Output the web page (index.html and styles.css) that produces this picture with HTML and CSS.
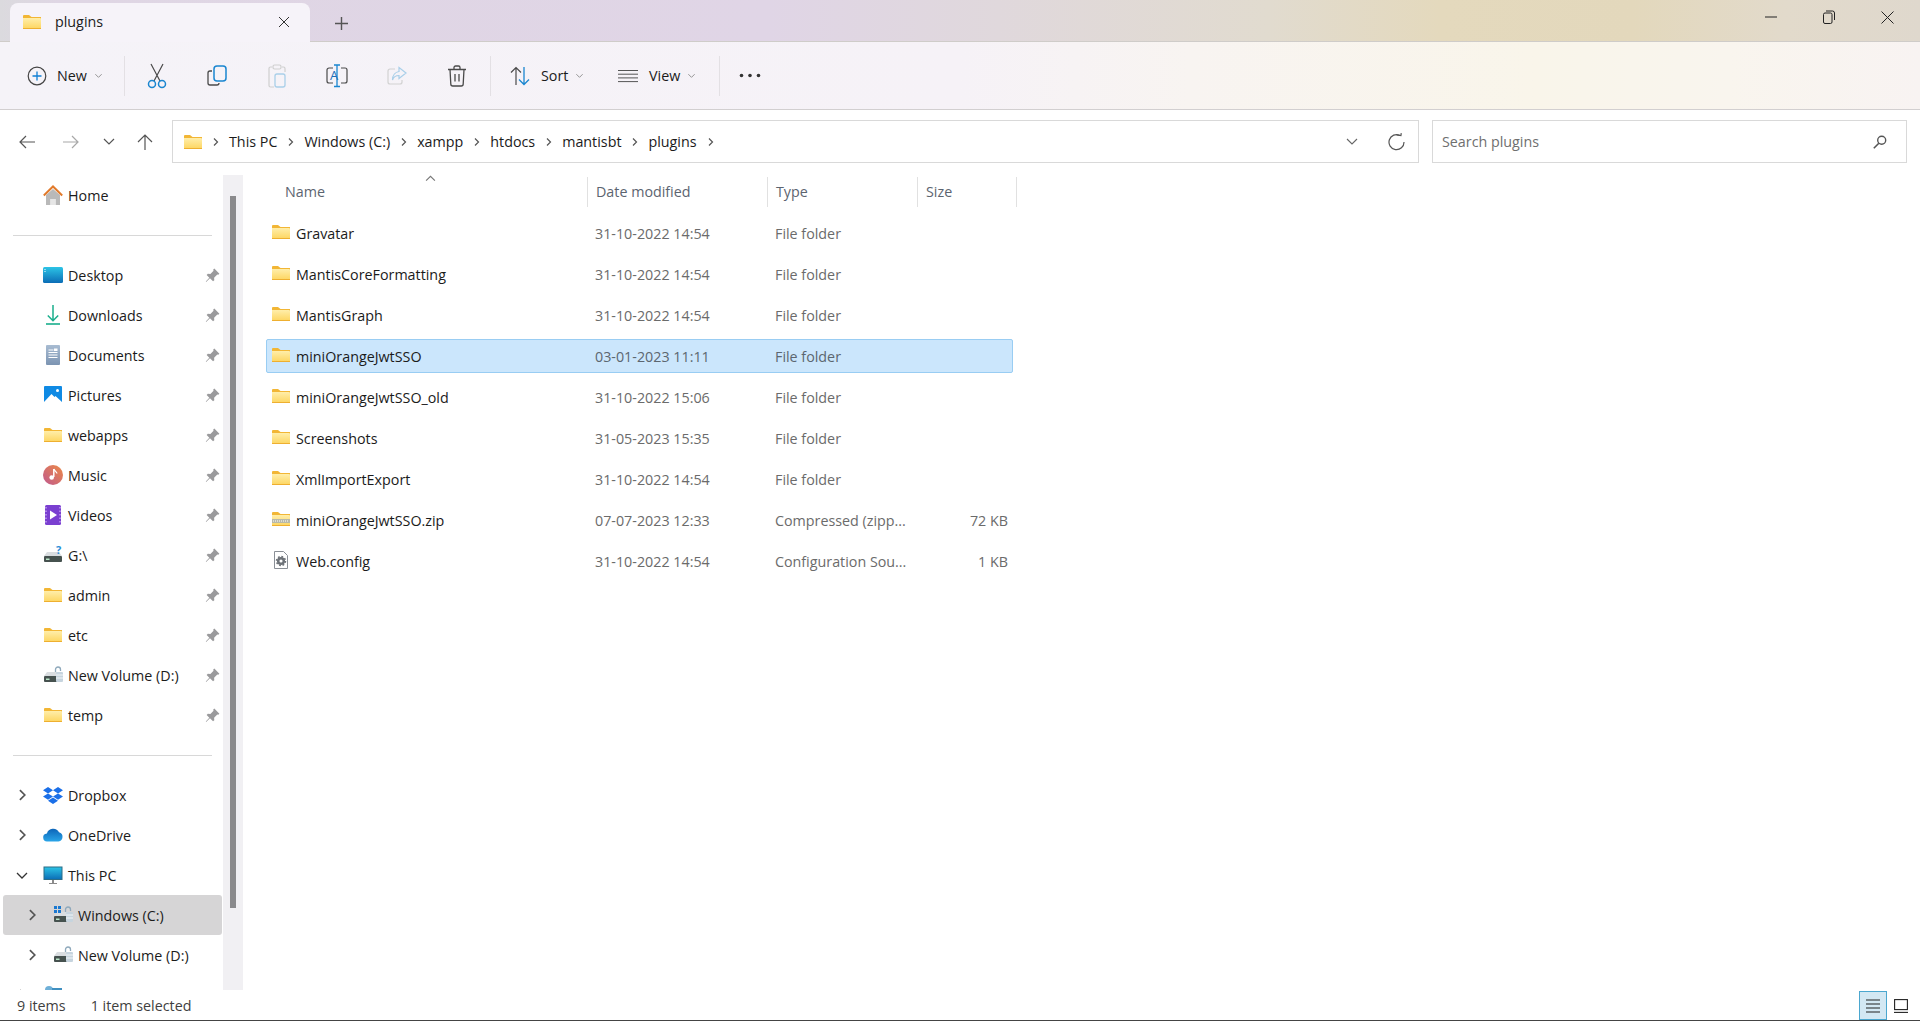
FILE: index.html
```html
<!DOCTYPE html>
<html>
<head>
  <title>plugins - File Explorer</title>
  <link rel="stylesheet" href="styles.css">
</head>
<body>
  <svg class="sprites" width="0" height="0">
    <defs>
      <linearGradient id="folder-fill" x1="0" y1="0" x2="0" y2="1">
        <stop offset="0" stop-color="#ffeeaa"/>
        <stop offset="1" stop-color="#fdd55f"/>
      </linearGradient>
      <linearGradient id="desk-fill" x1="0" y1="0" x2="0" y2="1">
        <stop offset="0" stop-color="#2cc4e6"/>
        <stop offset="1" stop-color="#0b6db6"/>
      </linearGradient>
      <linearGradient id="doc-fill" x1="0" y1="0" x2="0" y2="1">
        <stop offset="0" stop-color="#a8bcd2"/>
        <stop offset="1" stop-color="#7c94b2"/>
      </linearGradient>
      <linearGradient id="music-fill" x1="1" y1="0" x2="0" y2="1">
        <stop offset="0" stop-color="#ec8a45"/>
        <stop offset="1" stop-color="#c0598f"/>
      </linearGradient>
      <linearGradient id="cloud-fill" x1="0" y1="0" x2="0" y2="1">
        <stop offset="0" stop-color="#0c64b8"/>
        <stop offset="1" stop-color="#2aa5e8"/>
      </linearGradient>
    </defs>
    <symbol id="folder" viewBox="0 0 18 14">
      <path d="M0 1a1 1 0 0 1 1-1h5l2.500 2H18v3H0z" fill="#f2b635"/>
      <path d="M0 3h17a1 1 0 0 1 1 1v10H0z" fill="url(#folder-fill)"/>
      <path d="M0 13h18v1H0z" fill="#eeaf30"/>
    </symbol>
    <symbol id="chev" viewBox="0 0 8 10"><path d="M2.500 1.500 6 5 2.500 8.500" fill="none" stroke="#555" stroke-width="1.200"/></symbol>
    <symbol id="caret" viewBox="0 0 10 6"><path d="M1.500 1 5 4.500 8.500 1" fill="none" stroke="#8a8a8a" stroke-width="1"/></symbol>
    <symbol id="pin" viewBox="0 0 16 16">
      <path d="M9.700 1.500 14.500 6.300 13.400 7.400 12.500 7 9.500 10 9.700 12.400 8.500 13.500 5.600 10.600 2 14 1.700 13.700 5 10 2.500 7.500 3.600 6.300 6 6.500 9 3.500 8.600 2.600z" fill="#9a9a9c"/>
    </symbol>
    <symbol id="drive" viewBox="0 0 20 20">
      <path d="M1 11 4 7h12l3 4z" fill="#d9dde0"/>
      <rect x="1" y="11" width="18" height="6" rx="1" fill="#46524f"/>
      <rect x="3" y="13.500" width="3.500" height="1.500" fill="#b9e6c9"/>
    </symbol>
    <symbol id="lock" viewBox="0 0 20 20">
      <path d="M12.500 7V4.500a2.500 2.500 0 0 1 5 0V6" fill="none" stroke="#8fa9bc" stroke-width="1.300"/>
      <rect x="13" y="7" width="7" height="10" rx="1" fill="#c6d4de"/>
      <path d="M13 10h7M13 13h7" stroke="#f2f5f7" stroke-width="1"/>
    </symbol>
  </svg>

  <div class="titlebar">
    <div class="tab">
      <svg class="ic-folder"><use href="#folder"/></svg>
      <span class="tab-name">plugins</span>
      <svg class="tab-close" viewBox="0 0 12 12"><path d="M1 1l10 10M11 1 1 11" stroke="#333" stroke-width="1"/></svg>
    </div>
    <svg class="tab-add" viewBox="0 0 12 12"><path d="M6 0v12M0 6h12" stroke="#555" stroke-width="1.300"/></svg>
    <div class="win-controls">
      <span class="win-btn"><svg width="12" height="12" viewBox="0 0 12 12"><path d="M0 6h12" stroke="#222" stroke-width="1"/></svg></span>
      <span class="win-btn"><svg width="12" height="14" viewBox="0 0 12 14"><rect x="0.500" y="3" width="8.500" height="10.500" rx="1.500" fill="none" stroke="#222"/><path d="M3 1h6.500a2 2 0 0 1 2 2v7" fill="none" stroke="#222"/></svg></span>
      <span class="win-btn"><svg width="13" height="13" viewBox="0 0 13 13"><path d="M.5.5l12 12M12.500.5l-12 12" stroke="#222" stroke-width="1"/></svg></span>
    </div>
  </div>

  <div class="toolbar">
    <div class="tool tool-new">
      <svg width="20" height="20" viewBox="0 0 20 20"><circle cx="10" cy="10" r="8.800" fill="none" stroke="#444" stroke-width="1.200"/><path d="M10 5.500v9M5.500 10h9" stroke="#0f7fd4" stroke-width="1.300"/></svg>
      <span>New</span>
      <svg class="caret"><use href="#caret"/></svg>
    </div>
    <div class="tool-sep"></div>
    <div class="tool-icons">
      <div class="tool icon-tool">
        <svg width="20" height="26" viewBox="0 0 20 26"><path d="M4 1l9 17M16 1 7 18" stroke="#4a4a4a" stroke-width="1.200" fill="none"/><circle cx="5" cy="21" r="3.500" fill="none" stroke="#1a86d0" stroke-width="1.500"/><circle cx="15" cy="21" r="3.500" fill="none" stroke="#1a86d0" stroke-width="1.500"/></svg>
      </div>
      <div class="tool icon-tool">
        <svg width="20" height="22" viewBox="0 0 20 22"><path d="M5 6H3a2 2 0 0 0-2 2v10a2 2 0 0 0 2 2h7a2 2 0 0 0 2-2" fill="none" stroke="#4a4a4a" stroke-width="1.300"/><rect x="7" y="1" width="12" height="15" rx="3" fill="none" stroke="#1a86d0" stroke-width="1.500"/></svg>
      </div>
      <div class="tool icon-tool">
        <svg width="18" height="24" viewBox="0 0 18 24"><path d="M4 3H2.500A1.500 1.500 0 0 0 1 4.500v17A1.500 1.500 0 0 0 2.500 23H6M14 3h1.500A1.500 1.500 0 0 1 17 4.500V8" fill="none" stroke="#cfcfcf" stroke-width="1.200"/><rect x="5" y="1" width="8" height="4" rx="1.500" fill="none" stroke="#cfcfcf" stroke-width="1.200"/><rect x="7" y="10" width="10" height="13" rx="2" fill="none" stroke="#a9cfe9" stroke-width="1.300"/></svg>
      </div>
      <div class="tool icon-tool">
        <svg width="22" height="24" viewBox="0 0 22 24"><path d="M7 4H3a2 2 0 0 0-2 2v11a2 2 0 0 0 2 2h4M15 4h4a2 2 0 0 1 2 2v11a2 2 0 0 1-2 2h-4" fill="none" stroke="#4a4a4a" stroke-width="1.200"/><path d="M8 1h6M8 22.500h6M11 1v21.500" stroke="#1a86d0" stroke-width="1.300" fill="none"/><text class="rename-a" x="4" y="16">A</text></svg>
      </div>
      <div class="tool icon-tool">
        <svg width="20" height="20" viewBox="0 0 20 20"><path d="M8 3H3a2 2 0 0 0-2 2v11a2 2 0 0 0 2 2h10a2 2 0 0 0 2-2v-2" fill="none" stroke="#d2d2d2" stroke-width="1.200"/><path d="M12 1.500 19 7l-7 5.500V9.500C9 9.500 6.500 11 5.500 14c0-5 3-8 6.500-8.500z" fill="none" stroke="#a9cfe9" stroke-width="1.200"/></svg>
      </div>
      <div class="tool icon-tool">
        <svg width="18" height="22" viewBox="0 0 18 22"><path d="M0 4.500h18M6 4.500V2.500a1.500 1.500 0 0 1 1.500-1.500h3A1.500 1.500 0 0 1 12 2.500v2M2 4.500l.8 14.500a2 2 0 0 0 2 2h8.400a2 2 0 0 0 2-2L16 4.500M7 9v7.500M11 9v7.500" fill="none" stroke="#4a4a4a" stroke-width="1.300"/></svg>
      </div>
    </div>
    <div class="tool-sep"></div>
    <div class="tool tool-sort">
      <svg width="20" height="20" viewBox="0 0 20 20"><path d="M6 19V1.500M1 6.500l5-5 5 5" fill="none" stroke="#4a4a4a" stroke-width="1.200"/><path d="M14 1v17.500M9 13.500l5 5 5-5" fill="none" stroke="#1a86d0" stroke-width="1.300"/></svg>
      <span>Sort</span>
      <svg class="caret"><use href="#caret"/></svg>
    </div>
    <div class="tool tool-view">
      <svg width="20" height="14" viewBox="0 0 20 14"><path d="M0 1.500h20M0 5.200h20M0 8.900h20M0 12.600h20" stroke="#555" stroke-width="1"/></svg>
      <span>View</span>
      <svg class="caret"><use href="#caret"/></svg>
    </div>
    <div class="tool-sep"></div>
    <div class="tool tool-more">
      <svg width="22" height="5" viewBox="0 0 22 5"><circle cx="2.500" cy="2.500" r="1.800" fill="#333"/><circle cx="11" cy="2.500" r="1.800" fill="#333"/><circle cx="19.500" cy="2.500" r="1.800" fill="#333"/></svg>
    </div>
  </div>

  <div class="navrow">
    <div class="nav-btn nav-wide"><svg width="16" height="14" viewBox="0 0 16 14"><path d="M16 7H1M7 1 1 7l6 6" fill="none" stroke="#555" stroke-width="1.200"/></svg></div>
    <div class="nav-btn nav-wide"><svg width="16" height="14" viewBox="0 0 16 14"><path d="M0 7h15M9 1l6 6-6 6" fill="none" stroke="#a8a8a8" stroke-width="1.200"/></svg></div>
    <div class="nav-btn nav-small"><svg width="12" height="7" viewBox="0 0 12 7"><path d="M1 1l5 5 5-5" fill="none" stroke="#555" stroke-width="1.200"/></svg></div>
    <div class="nav-btn nav-up"><svg width="16" height="16" viewBox="0 0 16 16"><path d="M8 16V1M1 8l7-7 7 7" fill="none" stroke="#555" stroke-width="1.200"/></svg></div>
    <div class="address">
      <svg class="ic-folder"><use href="#folder"/></svg>
      <svg class="crumb-sep"><use href="#chev"/></svg><span>This PC</span>
      <svg class="crumb-sep"><use href="#chev"/></svg><span>Windows (C:)</span>
      <svg class="crumb-sep"><use href="#chev"/></svg><span>xampp</span>
      <svg class="crumb-sep"><use href="#chev"/></svg><span>htdocs</span>
      <svg class="crumb-sep"><use href="#chev"/></svg><span>mantisbt</span>
      <svg class="crumb-sep"><use href="#chev"/></svg><span>plugins</span>
      <svg class="crumb-sep"><use href="#chev"/></svg>
      <div class="addr-btn addr-first"><svg width="12" height="7" viewBox="0 0 12 7"><path d="M1 1l5 5 5-5" fill="none" stroke="#666" stroke-width="1.100"/></svg></div>
      <div class="addr-btn"><svg width="17" height="18" viewBox="0 0 17 18"><path d="M12 2.500A7.500 7.500 0 1 0 16 9" fill="none" stroke="#555" stroke-width="1.200"/><path d="M8.500 2.500H13V0" fill="none" stroke="#555" stroke-width="1.200" transform="rotate(8 12 2)"/></svg></div>
    </div>
    <div class="search">
      <span>Search plugins</span>
      <svg class="search-ic" width="14" height="14" viewBox="0 0 14 14"><circle cx="8.700" cy="5.300" r="4" fill="none" stroke="#555" stroke-width="1.400"/><path d="M5.800 8.200.8 13.200" stroke="#555" stroke-width="1.600"/></svg>
    </div>
  </div>

  <div class="main">
    <div class="sidebar">
      <div class="side-row">
        <span class="arrow"></span>
        <svg class="side-ic" viewBox="0 0 20 20"><path d="M3 10 10 4l7 6v10h-4.500v-6h-5v6H3z" fill="#b9b9b9"/><path d="M7.500 14h5v6h-5z" fill="#e6e6e6"/><path d="M.8 10.500 10 1.500l9.200 9" fill="none" stroke="#e17a2b" stroke-width="2"/></svg>
        <span class="side-label">Home</span>
      </div>
      <div class="side-divider"></div>

      <div class="side-row">
        <span class="arrow"></span>
        <svg class="side-ic" viewBox="0 0 20 20"><rect y="2" width="20" height="16" rx="1.500" fill="url(#desk-fill)"/><path d="M1.500 4h1v1h-1zM1.500 6h1v1h-1z" fill="#fff"/></svg>
        <span class="side-label">Desktop</span>
        <svg class="pin"><use href="#pin"/></svg>
      </div>
      <div class="side-row">
        <span class="arrow"></span>
        <svg class="side-ic" viewBox="0 0 20 20"><path d="M10 0v15.500M4.800 10.500l5.200 5.200 5.200-5.200" fill="none" stroke="#1aae8c" stroke-width="1.500"/><path d="M3 19h14" stroke="#1aae8c" stroke-width="1.600"/></svg>
        <span class="side-label">Downloads</span>
        <svg class="pin"><use href="#pin"/></svg>
      </div>
      <div class="side-row">
        <span class="arrow"></span>
        <svg class="side-ic" viewBox="0 0 20 20"><rect x="3" y="0" width="14" height="20" rx="1" fill="url(#doc-fill)"/><path d="M5.500 5h5M5.500 7.500h9M5.500 10h9M5.500 12.500h9" stroke="#fff" stroke-width="1"/><path d="M11 3.500h3.500V6H11z" fill="#fff"/></svg>
        <span class="side-label">Documents</span>
        <svg class="pin"><use href="#pin"/></svg>
      </div>
      <div class="side-row">
        <span class="arrow"></span>
        <svg class="side-ic" viewBox="0 0 20 20"><rect x="1" y="1" width="18" height="18" rx="1" fill="#0f8ae4"/><path d="M1 17 8.500 9l3 3 1-1 6.500 6v2H1z" fill="#fff"/><circle cx="14.500" cy="5.500" r="1.500" fill="#fff"/></svg>
        <span class="side-label">Pictures</span>
        <svg class="pin"><use href="#pin"/></svg>
      </div>
      <div class="side-row">
        <span class="arrow"></span>
        <svg class="ic-folder side-folder"><use href="#folder"/></svg>
        <span class="side-label">webapps</span>
        <svg class="pin"><use href="#pin"/></svg>
      </div>
      <div class="side-row">
        <span class="arrow"></span>
        <svg class="side-ic" viewBox="0 0 20 20"><circle cx="10" cy="10" r="10" fill="url(#music-fill)"/><path d="M10.800 4v8" stroke="#fff" stroke-width="1.500"/><path d="M10.800 4c.5 2 3 2.500 3.200 4.500" fill="none" stroke="#fff" stroke-width="1.200"/><circle cx="8.700" cy="12.500" r="2.300" fill="#fff"/></svg>
        <span class="side-label">Music</span>
        <svg class="pin"><use href="#pin"/></svg>
      </div>
      <div class="side-row">
        <span class="arrow"></span>
        <svg class="side-ic" viewBox="0 0 20 20"><rect x="2" y="0" width="16" height="20" rx="1.500" fill="#7a3fd0"/><path d="M7 5.500 14 10l-7 4.500z" fill="#fff"/><path d="M3 2v16M17 2v16" stroke="#c9a8f5" stroke-width="1.300" stroke-dasharray="1.500 2"/></svg>
        <span class="side-label">Videos</span>
        <svg class="pin"><use href="#pin"/></svg>
      </div>
      <div class="side-row">
        <span class="arrow"></span>
        <svg class="side-ic" viewBox="0 0 20 20"><use href="#drive"/><text class="drive-q" x="13" y="9">?</text></svg>
        <span class="side-label">G:\</span>
        <svg class="pin"><use href="#pin"/></svg>
      </div>
      <div class="side-row">
        <span class="arrow"></span>
        <svg class="ic-folder side-folder"><use href="#folder"/></svg>
        <span class="side-label">admin</span>
        <svg class="pin"><use href="#pin"/></svg>
      </div>
      <div class="side-row">
        <span class="arrow"></span>
        <svg class="ic-folder side-folder"><use href="#folder"/></svg>
        <span class="side-label">etc</span>
        <svg class="pin"><use href="#pin"/></svg>
      </div>
      <div class="side-row">
        <span class="arrow"></span>
        <svg class="side-ic" viewBox="0 0 20 20"><use href="#drive"/><use href="#lock"/></svg>
        <span class="side-label">New Volume (D:)</span>
        <svg class="pin"><use href="#pin"/></svg>
      </div>
      <div class="side-row">
        <span class="arrow"></span>
        <svg class="ic-folder side-folder"><use href="#folder"/></svg>
        <span class="side-label">temp</span>
        <svg class="pin"><use href="#pin"/></svg>
      </div>
      <div class="side-divider"></div>

      <div class="side-row">
        <svg class="arrow-ic"><use href="#chev"/></svg>
        <svg class="side-ic" viewBox="0 0 20 20"><path d="M5 2 10 5.200 5 8.400 0 5.200zM15 2l5 3.200-5 3.200-5-3.200zM5 8.400l5 3.200-5 3.200-5-3.200zM15 8.400l5 3.200-5 3.200-5-3.200zM5 15.800l5-3.200 5 3.200-5 3.200z" fill="#1a6fe8"/></svg>
        <span class="side-label">Dropbox</span>
      </div>
      <div class="side-row">
        <svg class="arrow-ic"><use href="#chev"/></svg>
        <svg class="side-ic" viewBox="0 0 20 20"><path d="M4.500 16.500a4 4 0 0 1-.6-8A6.500 6.500 0 0 1 16 7.300 4.700 4.700 0 0 1 15.500 16.500z" fill="url(#cloud-fill)"/></svg>
        <span class="side-label">OneDrive</span>
      </div>
      <div class="side-row">
        <svg class="arrow-ic arrow-open" viewBox="0 0 12 7"><path d="M1 1l5 5 5-5" fill="none" stroke="#333" stroke-width="1.300"/></svg>
        <svg class="side-ic" viewBox="0 0 20 20"><rect x="1" y="2" width="18" height="12.500" fill="url(#desk-fill)" stroke="#2b6d86" stroke-width="1"/><path d="M9 15h2v3H9zM6 18h8v1H6z" fill="#8b8b8b"/></svg>
        <span class="side-label">This PC</span>
      </div>
      <div class="side-row indent selected">
        <svg class="arrow-ic"><use href="#chev"/></svg>
        <svg class="side-ic" viewBox="0 0 20 20"><use href="#drive"/><use href="#lock"/><path d="M1 1h3v3H1zM5 1h3v3H5zM1 5h3v3H1zM5 5h3v3H5z" fill="#1a78d0"/></svg>
        <span class="side-label">Windows (C:)</span>
      </div>
      <div class="side-row indent">
        <svg class="arrow-ic"><use href="#chev"/></svg>
        <svg class="side-ic" viewBox="0 0 20 20"><use href="#drive"/><use href="#lock"/></svg>
        <span class="side-label">New Volume (D:)</span>
      </div>
      <div class="side-row">
        <svg class="arrow-ic"><use href="#chev"/></svg>
        <svg class="side-ic" viewBox="0 0 20 20"><circle cx="6" cy="5" r="4" fill="#6fb0d8"/><rect x="9" y="3" width="10" height="7" fill="#3f8fc0"/><rect x="1" y="12" width="18" height="6" fill="#6d8ea6"/></svg>
        <span class="side-label">Network</span>
      </div>
    </div>

    <div class="side-scroll"><div class="side-thumb"></div></div>

    <div class="files">
      <div class="file-head">
        <div class="head-cell head-name">Name<svg class="sort-caret" viewBox="0 0 10 6"><path d="M1 5 5 1l4 4" fill="none" stroke="#777" stroke-width="1"/></svg></div>
        <div class="head-cell">Date modified</div>
        <div class="head-cell">Type</div>
        <div class="head-cell head-last">Size</div>
      </div>
      <div class="file-rows">
        <div class="file-row">
          <div class="cell-name"><svg class="ic-folder"><use href="#folder"/></svg>Gravatar</div>
          <div class="cell-meta">31-10-2022 14:54</div><div class="cell-meta">File folder</div><div class="cell-size"></div>
        </div>
        <div class="file-row">
          <div class="cell-name"><svg class="ic-folder"><use href="#folder"/></svg>MantisCoreFormatting</div>
          <div class="cell-meta">31-10-2022 14:54</div><div class="cell-meta">File folder</div><div class="cell-size"></div>
        </div>
        <div class="file-row">
          <div class="cell-name"><svg class="ic-folder"><use href="#folder"/></svg>MantisGraph</div>
          <div class="cell-meta">31-10-2022 14:54</div><div class="cell-meta">File folder</div><div class="cell-size"></div>
        </div>
        <div class="file-row is-selected">
          <div class="cell-name"><svg class="ic-folder"><use href="#folder"/></svg>miniOrangeJwtSSO</div>
          <div class="cell-meta">03-01-2023 11:11</div><div class="cell-meta">File folder</div><div class="cell-size"></div>
        </div>
        <div class="file-row">
          <div class="cell-name"><svg class="ic-folder"><use href="#folder"/></svg>miniOrangeJwtSSO_old</div>
          <div class="cell-meta">31-10-2022 15:06</div><div class="cell-meta">File folder</div><div class="cell-size"></div>
        </div>
        <div class="file-row">
          <div class="cell-name"><svg class="ic-folder"><use href="#folder"/></svg>Screenshots</div>
          <div class="cell-meta">31-05-2023 15:35</div><div class="cell-meta">File folder</div><div class="cell-size"></div>
        </div>
        <div class="file-row">
          <div class="cell-name"><svg class="ic-folder"><use href="#folder"/></svg>XmlImportExport</div>
          <div class="cell-meta">31-10-2022 14:54</div><div class="cell-meta">File folder</div><div class="cell-size"></div>
        </div>
        <div class="file-row">
          <div class="cell-name">
            <svg class="ic-folder" viewBox="0 0 18 14"><use href="#folder" width="18" height="14"/><rect x="0" y="7" width="18" height="4" fill="#b9b9a8"/><path d="M1 9h16" stroke="#fff" stroke-width="1" stroke-dasharray="1 1"/></svg>miniOrangeJwtSSO.zip
          </div>
          <div class="cell-meta">07-07-2023 12:33</div><div class="cell-meta">Compressed (zipp...</div><div class="cell-size">72 KB</div>
        </div>
        <div class="file-row">
          <div class="cell-name">
            <svg class="ic-folder ic-file" viewBox="0 0 18 18"><path d="M2.500.5h9l4 4v13h-13z" fill="#fff" stroke="#8a8f96"/><circle cx="9" cy="10" r="2.800" fill="none" stroke="#6d7278" stroke-width="2.500"/><circle cx="9" cy="10" r="4.500" fill="none" stroke="#6d7278" stroke-width="1.500" stroke-dasharray="1.800 1.700"/></svg>Web.config
          </div>
          <div class="cell-meta">31-10-2022 14:54</div><div class="cell-meta">Configuration Sou...</div><div class="cell-size">1 KB</div>
        </div>
      </div>
    </div>
  </div>

  <div class="statusbar">
    <span>9 items</span>
    <span class="status-sel">1 item selected</span>
    <div class="view-toggle">
      <span class="view-btn view-on"><svg width="14" height="14" viewBox="0 0 14 14"><path d="M0 1h14M0 5h14M0 9h14M0 13h14" stroke="#222" stroke-width="1.200"/></svg></span>
      <span class="view-btn"><svg width="14" height="14" viewBox="0 0 14 14"><rect x="0.600" y="0.600" width="12.800" height="10" fill="none" stroke="#222" stroke-width="1.100"/><path d="M0 13.400h14" stroke="#222" stroke-width="1.100"/></svg></span>
    </div>
  </div>
</body>
</html>
```

FILE: styles.css
```css
*, *::before, *::after {
  box-sizing: border-box;
}

html, body {
  height: 100%;
}

body {
  margin: 0;
  display: flex;
  flex-direction: column;
  height: 1021px;
  overflow: hidden;
  background: #fff;
  color: #1b1b1b;
  font-family: "Open Sans", "Noto Sans", sans-serif;
  font-size: 14.300px;
}

.sprites {
  position: absolute;
}

svg {
  display: block;
  flex: none;
}

.ic-folder {
  width: 18px;
  height: 14px;
}

/* title bar */
.titlebar {
  display: flex;
  align-items: flex-end;
  height: 42px;
  flex: none;
  padding-left: 10px;
  background: linear-gradient(90deg, #dbdade 0, #dfd6e4 3%, #e0d5e6 40%, #e0d8dc 52%, #e1dbcf 66%, #e4d9bd 75%, #e3d8bc 85%, #e2dacb 93%, #dfd8cd 100%);
  border-bottom: 1px solid #cfccc9;
}

.tab {
  display: flex;
  align-items: center;
  width: 300px;
  height: 39px;
  margin-bottom: -1px;
  padding: 0 0 2px 13px;
  background: #f6f3f9;
  border-radius: 8px 8px 0 0;
}

.tab-name {
  margin-left: 14px;
}

.tab-close {
  width: 12px;
  height: 12px;
  margin-left: auto;
  margin-right: 20px;
}

.tab-add {
  width: 13px;
  height: 13px;
  margin: 0 0 11px 25px;
}

.win-controls {
  display: flex;
  align-self: flex-start;
  margin-left: auto;
  padding-right: 3px;
}

.win-btn {
  display: flex;
  align-items: center;
  justify-content: center;
  width: 58.500px;
  height: 34px;
}

/* command bar */
.toolbar {
  display: flex;
  align-items: center;
  height: 68px;
  flex: none;
  background: linear-gradient(90deg, #f5f3f8 0, #f6f2f7 50%, #f8f4f1 62%, #f9f5ea 80%, #f9f5ee 90%, #f8f3f2 100%);
  border-bottom: 1px solid #d2cfd0;
}

.tool {
  display: flex;
  align-items: center;
}

.tool-new {
  width: 124px;
  padding-left: 27px;
}

.tool-new span {
  margin-left: 10px;
}

.caret {
  width: 9px;
  height: 6px;
  margin-left: 7px;
}

.tool-sep {
  width: 1px;
  height: 40px;
  background: #e3e0e4;
}

.tool-icons {
  display: flex;
  padding: 0 3px 0 2px;
}

.icon-tool {
  justify-content: center;
  width: 60px;
}

.tool-sort {
  width: 99px;
  padding-left: 19px;
}

.tool-sort span {
  margin-left: 11px;
}

.tool-view {
  width: 129px;
  padding-left: 28px;
}

.tool-view span {
  margin-left: 11px;
}

.tool-more {
  padding-left: 19px;
}

.rename-a {
  font-family: "Open Sans", sans-serif;
  font-size: 13px;
  fill: #1a6fb8;
}

/* address row */
.navrow {
  display: flex;
  align-items: flex-start;
  height: 60px;
  flex: none;
  padding: 10px 13px 0 5px;
}

.nav-btn {
  display: flex;
  align-items: center;
  justify-content: center;
  height: 43px;
}

.nav-wide {
  width: 44px;
}

.nav-small {
  width: 32px;
}

.nav-up {
  width: 40px;
  margin-right: 7px;
}

.address {
  display: flex;
  align-items: center;
  width: 1247px;
  height: 43px;
  padding-left: 11px;
  border: 1px solid #d9d9d9;
}

.crumb-sep {
  width: 27px;
  height: 10px;
}

.addr-btn {
  display: flex;
  align-items: center;
  justify-content: center;
  width: 44px;
  height: 100%;
}

.addr-first {
  margin-left: auto;
}

.search {
  display: flex;
  align-items: center;
  justify-content: space-between;
  width: 475px;
  height: 43px;
  margin-left: 13px;
  padding: 0 19px 0 9px;
  border: 1px solid #d9d9d9;
  color: #6f6f6f;
}

/* sidebar */
.main {
  display: flex;
  height: 820px;
  flex: none;
  overflow: hidden;
}

.sidebar {
  width: 223px;
  flex: none;
  padding-top: 5px;
  overflow: hidden;
}

.side-row {
  display: flex;
  align-items: center;
  width: 219px;
  height: 40px;
  margin-left: 3px;
  border-radius: 3px;
}

.side-row.indent {
  padding-left: 10px;
}

.selected {
  background: #d6d5d6;
}

.arrow {
  width: 38px;
  flex: none;
}

.arrow-ic {
  width: 12px;
  height: 14px;
  margin: 0 13px;
}

.arrow-open {
  height: 7px;
}

.side-ic {
  width: 20px;
  height: 20px;
  margin-left: 2px;
  overflow: visible;
}

.side-folder {
  margin: 0 1px 0 3px;
}

.side-label {
  margin-left: 5px;
  white-space: nowrap;
}

.pin {
  width: 17px;
  height: 17px;
  margin-left: auto;
  margin-right: 1px;
}

.side-divider {
  width: 199px;
  height: 1px;
  margin: 20px 0 19px 13px;
  background: #d8d8d8;
}

.drive-q {
  font-family: "Open Sans", sans-serif;
  font-size: 11px;
  font-weight: 700;
  fill: #2a8fd8;
}

.side-scroll {
  width: 20px;
  flex: none;
  margin-top: 5px;
  padding: 21px 0 0 7px;
  background: #f1f0f3;
}

.side-thumb {
  width: 6px;
  height: 712px;
  background: #8a8a8c;
}

/* file list */
.files {
  flex: 1;
  padding: 7px 0 0 23px;
  background: #fff;
}

.file-head {
  position: relative;
  display: grid;
  grid-template-columns: 321px 180px 150px 100px;
  width: 751px;
  height: 30px;
  color: #5c6470;
}

.head-cell {
  display: flex;
  align-items: center;
  padding: 0 0 2px 8px;
  border-left: 1px solid #e1e1e1;
}

.head-name {
  padding-left: 19px;
  border-left: 0;
}

.head-last {
  border-right: 1px solid #e1e1e1;
}

.sort-caret {
  position: absolute;
  top: -2px;
  left: 159px;
  width: 11px;
  height: 7px;
}

.file-rows {
  display: grid;
  row-gap: 7px;
  margin-top: 9px;
}

.file-row {
  display: grid;
  grid-template-columns: 320px 180px 150px 95px;
  align-items: center;
  width: 747px;
  height: 34px;
  border: 1px solid transparent;
  border-radius: 2px;
}

.is-selected {
  background: #cbe6fc;
  border-color: #99cdf3;
}

.cell-name {
  display: flex;
  align-items: center;
  padding-left: 5px;
  white-space: nowrap;
}

.cell-name svg {
  margin-right: 6px;
  transform: translateY(-1px);
}

.ic-file {
  height: 18px;
}

.cell-meta {
  padding-left: 8px;
  color: #6b6b6b;
  white-space: nowrap;
}

.is-selected .cell-meta {
  color: #5c6670;
}

.cell-size {
  padding-right: 4px;
  text-align: right;
  color: #6b6b6b;
}

/* status bar */
.statusbar {
  display: flex;
  align-items: center;
  height: 31px;
  flex: none;
  padding-left: 17px;
  border-bottom: 1px solid #444;
  color: #3f3f3f;
}

.status-sel {
  margin-left: 25px;
}

.view-toggle {
  display: flex;
  align-self: flex-end;
  margin-left: auto;
  margin-right: 5px;
}

.view-btn {
  display: flex;
  align-items: center;
  justify-content: center;
  width: 28px;
  height: 29px;
}

.view-on {
  background: #d3e8f3;
  border: 1px solid #4ba7cf;
}
```
